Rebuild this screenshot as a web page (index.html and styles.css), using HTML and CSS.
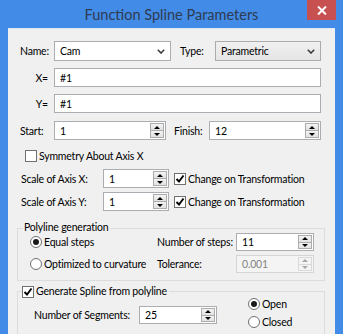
FILE: index.html
```html
<!DOCTYPE html>
<html lang="en">
<head>
    <meta charset="UTF-8">
    <title>Function Spline Parameters</title>
    <link rel="stylesheet" href="styles.css">
</head>
<body>
    <div class="window">
        <div class="titlebar">
            <div class="title">Function Spline Parameters</div>
            <div class="close">
                <svg width="10" height="9" viewBox="0 0 10 9"><path d="M1 0.5 L9 8.5 M9 0.5 L1 8.5" stroke="#fff" stroke-width="2"/></svg>
            </div>
        </div>

        <div class="panel">
            <div class="row r-name">
                <span class="lbl w34">Name:</span>
                <div class="combo edit w117">
                    <span class="val">Cam</span>
                    <svg class="chev" width="8" height="5" viewBox="0 0 8 5"><path d="M0.8 0.8 L4 4 L7.2 0.8" fill="none" stroke="#3c3c3c" stroke-width="1.6"/></svg>
                </div>
                <span class="lbl type-lbl">Type:</span>
                <div class="combo list w106">
                    <span class="val">Parametric</span>
                    <svg class="chev" width="8" height="5" viewBox="0 0 8 5"><path d="M0.8 0.8 L4 4 L7.2 0.8" fill="none" stroke="#3c3c3c" stroke-width="1.6"/></svg>
                </div>
            </div>

            <div class="row r-expr">
                <span class="lbl w34 eq">X=</span>
                <div class="field w267"><span class="val">#1</span></div>
            </div>
            <div class="row r-expr">
                <span class="lbl w34 eq">Y=</span>
                <div class="field w267"><span class="val">#1</span></div>
            </div>

            <div class="row r-range">
                <span class="lbl w34">Start:</span>
                <div class="spin w112">
                    <span class="val">1</span>
                    <span class="btns"><i class="up"></i><i class="dn"></i></span>
                </div>
                <span class="lbl finish-lbl">Finish:</span>
                <div class="spin w112">
                    <span class="val">12</span>
                    <span class="btns"><i class="up"></i><i class="dn"></i></span>
                </div>
            </div>

            <div class="row r-sym">
                <span class="check"></span>
                <span class="ctext">Symmetry About Axis X</span>
            </div>

            <div class="row r-scale first">
                <span class="lbl w82">Scale of Axis X:</span>
                <div class="spin w66">
                    <span class="val">1</span>
                    <span class="btns"><i class="up"></i><i class="dn"></i></span>
                </div>
                <span class="check on scale-check">
                    <svg width="10" height="10" viewBox="0 0 10 10"><path d="M1.5 5 L4 7.5 L8.5 1.5" fill="none" stroke="#000" stroke-width="1.9"/></svg>
                </span>
                <span class="ctext">Change on Transformation</span>
            </div>
            <div class="row r-scale">
                <span class="lbl w82">Scale of Axis Y:</span>
                <div class="spin w66">
                    <span class="val">1</span>
                    <span class="btns"><i class="up"></i><i class="dn"></i></span>
                </div>
                <span class="check on scale-check">
                    <svg width="10" height="10" viewBox="0 0 10 10"><path d="M1.5 5 L4 7.5 L8.5 1.5" fill="none" stroke="#000" stroke-width="1.9"/></svg>
                </span>
                <span class="ctext">Change on Transformation</span>
            </div>

            <div class="group poly">
                <span class="legend">Polyline generation</span>
                <label class="radio"><span class="dot on"></span>Equal steps</label>
                <span class="lbl">Number of steps:</span>
                <div class="spin w78">
                    <span class="val">11</span>
                    <span class="btns"><i class="up"></i><i class="dn"></i></span>
                </div>
                <label class="radio"><span class="dot"></span>Optimized to curvature</label>
                <span class="lbl">Tolerance:</span>
                <div class="spin w78 disabled">
                    <span class="val">0.001</span>
                    <span class="btns"><i class="up"></i><i class="dn"></i></span>
                </div>
            </div>

            <div class="group gen">
                <span class="legend check-legend">
                    <span class="check on">
                        <svg width="10" height="10" viewBox="0 0 10 10"><path d="M1.5 5 L4 7.5 L8.5 1.5" fill="none" stroke="#000" stroke-width="1.9"/></svg>
                    </span>
                    <span class="ctext">Generate Spline from polyline</span>
                </span>
                <div class="seg-row">
                    <span class="lbl w105">Number of Segments:</span>
                    <div class="spin w78">
                        <span class="val">25</span>
                        <span class="btns"><i class="up"></i><i class="dn"></i></span>
                    </div>
                </div>
                <div class="ends">
                    <label class="radio"><span class="dot on"></span>Open</label>
                    <label class="radio"><span class="dot"></span>Closed</label>
                </div>
            </div>
        </div>
    </div>
</body>
</html>
```

FILE: styles.css
```css
body {
    margin: 0;
    font-family: Lato, "Liberation Sans", sans-serif;
    font-size: 10.5px;
    letter-spacing: -0.2px;
    color: #000;
}
.window {
    width: 343px;
    height: 334px;
    overflow: hidden;
    background: #428be6;
    display: flex;
    flex-direction: column;
}
.titlebar {
    height: 28px;
    flex: none;
    position: relative;
    display: flex;
    align-items: center;
    justify-content: center;
}
.title {
    font-size: 14.5px;
    letter-spacing: 0;
    color: #2f3b52;
}
.close {
    position: absolute;
    top: 0;
    right: 7px;
    width: 29px;
    height: 20px;
    background: #c75050;
    display: flex;
    align-items: center;
    justify-content: center;
}
.panel {
    flex: 1;
    margin: 0 8px;
    background: #f0f0f0;
    border-top: 1px solid #dde6f2;
    padding-top: 12px;
}
.row {
    display: flex;
    align-items: center;
    padding-left: 12px;
}
.lbl {
    white-space: nowrap;
    flex: none;
}
.w34 { width: 34px; }
.w82 { width: 82px; }
.w105 { width: 105px; }
.w66 { width: 66px; }
.w78 { width: 78px; }
.w106 { width: 106px; }
.w112 { width: 112px; }
.w117 { width: 117px; }
.w267 { width: 267px; }
.eq {
    text-align: right;
    padding-right: 6px;
    box-sizing: border-box;
}
.type-lbl {
    width: 35px;
    margin-left: 9px;
}
.finish-lbl {
    width: 35px;
    margin-left: 8px;
}

/* rows */
.r-name { height: 20px; }
.r-expr { height: 19px; margin-top: 7px; }
.r-range { height: 19px; margin-top: 8px; }
.r-sym { height: 13px; margin-top: 9px; padding-left: 17px; }
.r-scale { height: 19px; margin-top: 4px; padding-left: 13px; }
.r-scale.first { margin-top: 7px; }
.scale-check { margin-left: 5px; }

/* inputs */
.combo, .field, .spin {
    box-sizing: border-box;
    height: 100%;
    border: 1px solid #abadb3;
    background: #fff;
    display: flex;
    align-items: center;
    flex: none;
}
.val {
    flex: 1;
    padding-left: 5px;
    white-space: nowrap;
}
.combo .chev {
    margin-right: 5px;
}
.combo.list {
    border-color: #acacac;
    background: linear-gradient(#f0f0f0, #e5e5e5);
}
.spin {
    height: 19px;
}
.btns {
    width: 16px;
    height: 100%;
    box-sizing: border-box;
    padding: 1px;
    display: flex;
    flex-direction: column;
}
.btns i {
    flex: 1;
    border: 1px solid #acacac;
    background: linear-gradient(#f3f3f3, #e2e2e2);
    display: flex;
    align-items: center;
    justify-content: center;
}
.btns i.dn {
    border-top: none;
}
.btns i::after {
    content: "";
    width: 0;
    height: 0;
    border-left: 3px solid transparent;
    border-right: 3px solid transparent;
}
.btns i.up::after {
    border-bottom: 3px solid #000;
}
.btns i.dn::after {
    border-top: 3px solid #000;
}
.spin.disabled {
    border-color: #d5d5d5;
    background: #f4f4f4;
    color: #838383;
}
.spin.disabled .btns i {
    border-color: #d9d9d9;
    background: #f4f4f4;
}
.spin.disabled .btns i.up::after {
    border-bottom-color: #a6a6a6;
}
.spin.disabled .btns i.dn::after {
    border-top-color: #a6a6a6;
}

/* checkbox and radio */
.check {
    box-sizing: border-box;
    width: 12px;
    height: 12px;
    border: 1px solid #707070;
    background: #fff;
    flex: none;
    display: flex;
    align-items: center;
    justify-content: center;
}
.ctext {
    margin-left: 2px;
    white-space: nowrap;
}
.radio {
    display: flex;
    align-items: center;
    gap: 2px;
    white-space: nowrap;
}
.dot {
    box-sizing: border-box;
    flex: none;
    width: 12px;
    height: 12px;
    border: 1px solid #707070;
    border-radius: 50%;
    background: #fff;
    display: flex;
    align-items: center;
    justify-content: center;
}
.dot.on::after {
    content: "";
    width: 6px;
    height: 6px;
    border-radius: 50%;
    background: #1a1a1a;
}

/* group boxes */
.group {
    position: relative;
    margin-left: 9px;
    width: 308px;
    box-sizing: border-box;
    border: 1px solid #dcdcdc;
}
.legend {
    position: absolute;
    top: -9px;
    left: 5px;
    line-height: 15px;
    padding: 0 2px 0 1px;
    background: #f0f0f0;
}
.poly {
    margin-top: 17px;
    padding: 4px 0 7px 12px;
    display: grid;
    grid-template-columns: 127px 79px 78px;
    grid-auto-rows: 18px;
    row-gap: 4px;
    align-items: center;
}
.poly .spin {
    height: 18px;
}
.gen {
    margin-top: 10px;
    padding: 3px 0 20px 16px;
    display: flex;
    align-items: flex-start;
}
.check-legend {
    display: flex;
    align-items: center;
    top: -8px;
    left: 4px;
    padding: 0 2px 0 0;
}
.seg-row {
    display: flex;
    align-items: center;
    height: 18px;
    margin-top: 11px;
}
.seg-row .spin {
    height: 18px;
}
.ends {
    margin-left: 31px;
    display: flex;
    flex-direction: column;
}
.ends .radio {
    height: 18px;
}
```
